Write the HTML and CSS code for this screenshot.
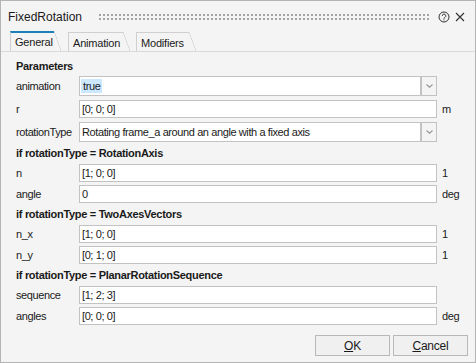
FILE: index.html
```html
<!DOCTYPE html>
<html lang="en">
	<head>
		<meta charset="UTF-8" />
		<meta name="viewport" content="width=device-width, initial-scale=1.0" />
		<title>FixedRotation</title>
		<link rel="stylesheet" href="styles.css">
	</head>
	<body>
		<div class="dialog">
			<div class="titlebar">
				<span class="title">FixedRotation</span>
				<span class="grip"></span>
				<svg class="help-icon" width="12" height="12" viewBox="0 0 12 12">
					<circle cx="6" cy="6" r="5" fill="none" stroke="#333" stroke-width="1" />
					<path d="M4.3 4.9 A1.75 1.75 0 1 1 6.9 6.4 C6.3 6.7 6 7 6 7.7" fill="none" stroke="#333" stroke-width="1" />
					<rect x="5.5" y="8.4" width="1" height="1" fill="#333" />
				</svg>
				<svg class="close-icon" width="10" height="10" viewBox="0 0 10 10">
					<path d="M1 1 L9 9 M9 1 L1 9" stroke="#333" stroke-width="1.1" />
				</svg>
			</div>

			<div class="tabs">
				<div class="tab active tab-general">General</div>
				<div class="tab tab-animation">Animation</div>
				<div class="tab tab-modifiers">Modifiers</div>
			</div>

			<div class="form">
				<div class="group">Parameters</div>

				<label>animation</label>
				<div class="combo">
					<div class="field"><span class="selected">true</span></div>
					<div class="drop"><svg width="7" height="4" viewBox="0 0 7 4"><path d="M0.5 0.5 L3.5 3.2 L6.5 0.5" fill="none" stroke="#999" stroke-width="1.2" /></svg></div>
				</div>
				<span class="unit"></span>

				<label>r</label>
				<div class="field">[0; 0; 0]</div>
				<span class="unit">m</span>

				<label>rotationType</label>
				<div class="combo">
					<div class="field">Rotating frame_a around an angle with a fixed axis</div>
					<div class="drop"><svg width="7" height="4" viewBox="0 0 7 4"><path d="M0.5 0.5 L3.5 3.2 L6.5 0.5" fill="none" stroke="#999" stroke-width="1.2" /></svg></div>
				</div>
				<span class="unit"></span>

				<div class="group">if rotationType = RotationAxis</div>

				<label>n</label>
				<div class="field">[1; 0; 0]</div>
				<span class="unit">1</span>

				<label>angle</label>
				<div class="field">0</div>
				<span class="unit">deg</span>

				<div class="group">if rotationType = TwoAxesVectors</div>

				<label>n_x</label>
				<div class="field">[1; 0; 0]</div>
				<span class="unit">1</span>

				<label>n_y</label>
				<div class="field">[0; 1; 0]</div>
				<span class="unit">1</span>

				<div class="group">if rotationType = PlanarRotationSequence</div>

				<label>sequence</label>
				<div class="field">[1; 2; 3]</div>
				<span class="unit"></span>

				<label>angles</label>
				<div class="field">[0; 0; 0]</div>
				<span class="unit">deg</span>
			</div>

			<div class="buttons">
				<button class="btn"><u>O</u>K</button>
				<button class="btn"><u>C</u>ancel</button>
			</div>
		</div>
	</body>
</html>
```

FILE: styles.css
```css
body {
	margin: 0;
	font-family: "Liberation Sans", Arial, sans-serif;
	font-size: 11px;
	letter-spacing: -0.4px;
	color: #1a1a1a;
	background-color: #f4f4f4;
}

.dialog {
	width: 476px;
	height: 363px;
	box-sizing: border-box;
	border: 1px solid #b4b4b4;
	background-color: #f4f4f4;
	display: flex;
	flex-direction: column;
}

/* Title bar */
.titlebar {
	height: 30px;
	display: flex;
	align-items: center;
	padding: 2px 0 0 7px;
	box-sizing: border-box;
}

.title {
	font-size: 12px;
	letter-spacing: 0;
	width: 89px;
}

.grip {
	width: 332px;
	height: 6px;
	background-image: conic-gradient(#a3a3a3 25%, transparent 0);
	background-size: 4px 4px;
}

.help-icon {
	margin-left: 9px;
}

.close-icon {
	margin-left: 5px;
}

/* Tabs */
.tabs {
	height: 21px;
	display: flex;
	align-items: flex-end;
	border-bottom: 1px solid #dadada;
	box-sizing: border-box;
	padding-left: 9px;
}

.tab {
	position: relative;
	height: 19px;
	box-sizing: border-box;
	border-left: 1px solid #cfcfcf;
	border-top: 1px solid #cfcfcf;
	padding: 3px 0 0 4px;
	line-height: 14px;
	letter-spacing: -0.2px;
}

.tab::after {
	content: "";
	position: absolute;
	top: -1px;
	right: -7px;
	width: 7px;
	height: calc(100% + 1px);
	background: linear-gradient(to top right, transparent calc(50% - 0.6px), #cfcfcf 50%, transparent calc(50% + 0.6px));
}

.tab.active {
	height: 20px;
	border-top: 2px solid #1c7fb5;
	padding-top: 2px;
}

.tab.active::after {
	top: -2px;
	height: calc(100% + 2px);
}

.tab-general {
	width: 44px;
}

.tab-animation {
	width: 55px;
	margin-left: 14px;
}

.tab-modifiers {
	width: 53px;
	margin-left: 13px;
}

/* Parameter grid */
.form {
	display: grid;
	grid-template-columns: 63px 358px 1fr;
	grid-template-rows: 19px 22px 23px 23px 20px 20px 21px 19px 21px 21px 20px 20px 22px;
	align-items: center;
	padding: 4px 0 0 15px;
}

.group {
	grid-column: 1 / 4;
	font-weight: bold;
	letter-spacing: -0.3px;
}

.form label {
	white-space: nowrap;
}

.field {
	height: 18px;
	box-sizing: border-box;
	border: 1px solid #c2c2c2;
	background-color: #ffffff;
	padding: 0 0 0 2px;
	line-height: 16px;
	white-space: nowrap;
	overflow: hidden;
}

.combo {
	display: flex;
	height: 20px;
}

.combo .field {
	flex: 1;
	height: 20px;
	line-height: 18px;
}

.selected {
	background-color: #cce8ff;
	padding: 1px 2px;
	margin-left: -1px;
}

.drop {
	width: 16px;
	height: 20px;
	box-sizing: border-box;
	border: 1px solid #c2c2c2;
	background-color: #f4f4f4;
	display: flex;
	align-items: center;
	justify-content: center;
}

.unit {
	padding-left: 5px;
}

/* Buttons */
.buttons {
	display: flex;
	justify-content: flex-end;
	gap: 3px;
	margin-top: 8px;
	padding-right: 7px;
}

.btn {
	width: 75px;
	height: 21px;
	font-family: "Liberation Sans", Arial, sans-serif;
	font-size: 12px;
	letter-spacing: -0.2px;
	color: #1a1a1a;
	background-color: #f0f0f0;
	border: 1px solid #b8b8b8;
	border-radius: 0;
	padding: 0;
}
```
